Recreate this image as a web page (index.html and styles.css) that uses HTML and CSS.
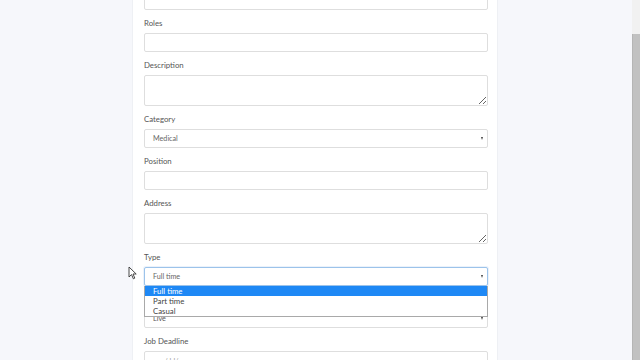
FILE: index.html
```html
<!DOCTYPE html>
<html lang="en">
<head>
    <meta charset="UTF-8">
    <meta name="viewport" content="width=device-width, initial-scale=1.0">
    <title>Post a Job</title>
    <link rel="stylesheet" href="styles.css">
</head>
<body>
    <div class="page">
        <main class="content">
            <form class="job-card">
                <div class="form-group">
                    <input class="form-control" type="text">
                </div>
                <div class="form-group">
                    <label class="form-label">Roles</label>
                    <input class="form-control" type="text">
                </div>
                <div class="form-group">
                    <label class="form-label">Description</label>
                    <textarea class="form-control form-area"></textarea>
                </div>
                <div class="form-group">
                    <label class="form-label">Category</label>
                    <div class="form-select">
                        <span>Medical</span>
                        <span class="caret"></span>
                    </div>
                </div>
                <div class="form-group">
                    <label class="form-label">Position</label>
                    <input class="form-control" type="text">
                </div>
                <div class="form-group">
                    <label class="form-label">Address</label>
                    <textarea class="form-control form-area"></textarea>
                </div>
                <div class="form-group">
                    <label class="form-label">Type</label>
                    <div class="select-wrap">
                        <div class="form-select focused">
                            <span>Full time</span>
                            <span class="caret"></span>
                        </div>
                        <ul class="select-menu">
                            <li class="active">Full time</li>
                            <li>Part time</li>
                            <li>Casual</li>
                        </ul>
                    </div>
                </div>
                <div class="form-group">
                    <label class="form-label">Status</label>
                    <div class="form-select">
                        <span class="dark">Live</span>
                        <span class="caret"></span>
                    </div>
                </div>
                <div class="form-group">
                    <label class="form-label">Job Deadline</label>
                    <input class="form-control" type="text" placeholder="mm/dd/yyyy">
                </div>
            </form>
        </main>
        <div class="scrollbar">
            <div class="scroll-track"></div>
            <div class="scroll-thumb"></div>
        </div>
    </div>

    <svg class="cursor" width="9" height="14" viewBox="0 0 9 14">
        <path d="M1 1 L1 11 L3.5 8.6 L5.4 12.8 L6.8 12.1 L5 8 L8.2 8 Z" fill="#fff" stroke="#333" stroke-width="0.9" stroke-linejoin="round"/>
    </svg>
</body>
</html>
```

FILE: styles.css
```css
body {
    margin: 0;
    font-family: Lato, "Open Sans", Arial, sans-serif;
    background-color: #f6f7fb;
    overflow: hidden;
}
.page {
    display: flex;
    height: 360px;
    overflow: hidden;
}
.content {
    flex: 1;
}
.job-card {
    width: 344px;
    margin: -21px 0 0 132px;
    padding: 12px 9px 20px 11px;
    background: #fff;
    border-left: 1px solid #eef0f4;
    border-right: 1px solid #eef0f4;
}
.form-group {
    margin-bottom: 8px;
}
.form-label {
    display: block;
    font-size: 7.8px;
    line-height: 11px;
    height: 10px;
    margin-bottom: 5px;
    color: #555;
}
.form-control {
    display: block;
    width: 100%;
    height: 19px;
    box-sizing: border-box;
    margin: 0;
    padding: 0 8px;
    border: 1px solid #dedede;
    border-radius: 2px;
    background: #fff;
    font-family: inherit;
    font-size: 7px;
    color: #666;
    outline: none;
}
.form-control::placeholder {
    color: #999;
}
.form-area {
    height: 31px;
    resize: vertical;
}
.form-select {
    display: flex;
    align-items: center;
    justify-content: space-between;
    height: 19px;
    box-sizing: border-box;
    padding: 0 4px 0 8px;
    border: 1px solid #dedede;
    border-radius: 2px;
    background: #fff;
    font-size: 7.2px;
    color: #666;
}
.form-select .dark {
    color: #555;
}
.form-select.focused {
    border-color: #9cc3ea;
    box-shadow: 0 0 0 1px rgba(120, 170, 230, 0.15);
}
.caret {
    width: 0;
    height: 0;
    border-left: 1.5px solid transparent;
    border-right: 1.5px solid transparent;
    border-top: 3px solid #444;
}
.select-wrap {
    position: relative;
}
.select-menu {
    position: absolute;
    top: 100%;
    left: 0;
    right: 0;
    margin: 0;
    padding: 0;
    list-style: none;
    background: #fff;
    border: 1px solid #a9a9a9;
    border-top: none;
    z-index: 2;
}
.select-menu li {
    height: 10px;
    line-height: 10px;
    padding-left: 8px;
    font-size: 7.8px;
    color: #444;
}
.select-menu li.active {
    background: #1e88f5;
    color: #fff;
}
.scrollbar {
    width: 8px;
    display: flex;
    flex-direction: column;
    background: #f1f1f1;
}
.scroll-track {
    height: 34px;
}
.scroll-thumb {
    flex: 1;
    background: #c1c1c1;
    border-left: 1px solid #b5b5b5;
}
.cursor {
    position: absolute;
    left: 128px;
    top: 266px;
}
```
